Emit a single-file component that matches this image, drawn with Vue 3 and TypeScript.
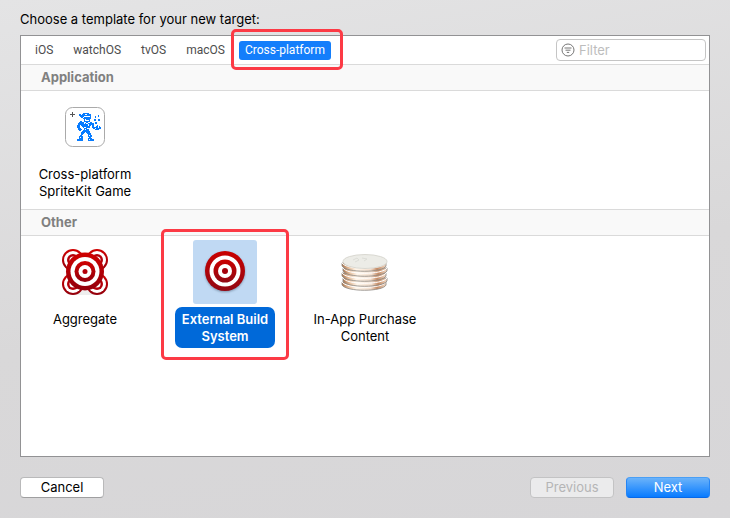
<script setup lang="ts">
import { ref } from 'vue'

const tabs = ['iOS', 'watchOS', 'tvOS', 'macOS', 'Cross-platform']
const activeTab = ref('Cross-platform')
const selected = ref('External Build System')
const filter = ref('')

const sections = [
  { title: 'Application', items: [{ name: 'Cross-platform SpriteKit Game', icon: 'sprite' }] },
  {
    title: 'Other',
    items: [
      { name: 'Aggregate', icon: 'aggregate' },
      { name: 'External Build System', icon: 'target' },
      { name: 'In-App Purchase Content', icon: 'coins' },
    ],
  },
]

// One character per pixel of the sprite.
const sprite = [
  '......######............',
  '..##.###..####..........',
  '..############.......#..',
  '...####......#....#..#..',
  '....##.#######....#.....',
  '......########..........',
  '.......#.####....##..##.',
  '.......#....#....##..##.',
  '...##..######...........',
  '..#####..##..##...##....',
  '.######.#..######.##....',
  '.##########.#####.......',
  '###.#######.##.##...#...',
  '###..########..##..##.#.',
  '###...#..####..######.##',
  '.###...###......##.#####',
  '.####..#.###......####..',
  '..##..######............',
  '.....########...........',
  '....####.####...........',
  '....###...####..........',
  '....##.....###..........',
  '...##......#.##.........',
  '..####.....####.........',
  '..#.##......##..........',
  '..####.....####.........',
  '######.....#.####.......',
  '######.....######.......',
]
const spritePath = sprite
  .map((row, y) => [...row].map((c, x) => (c === '#' ? `M${x + 16} ${y + 10}h1v1h-1z` : '')).join(''))
  .join('')

const smallTargets = [[12, 12], [36, 12], [12, 36], [36, 36]]
const coins = [37, 33, 28, 23, 18]
</script>

<template>
  <main class="dialog">
    <h1 class="prompt">Choose a template for your new target:</h1>

    <section class="panel">
      <header class="toolbar">
        <nav class="tabs">
          <button
            v-for="tab in tabs"
            :key="tab"
            type="button"
            class="tab"
            :class="{ active: tab === activeTab, marked: tab === 'Cross-platform' }"
            @click="activeTab = tab"
          >{{ tab }}</button>
        </nav>
        <label class="filter">
          <svg width="14" height="14" viewBox="0 0 14 14" fill="none" stroke="#767676" aria-hidden="true">
            <circle cx="7" cy="7" r="6" />
            <path d="M3.5 5h7M4.5 7.2h5M5.8 9.4h2.4" />
          </svg>
          <input v-model="filter" type="text" placeholder="Filter" aria-label="Filter" />
        </label>
      </header>

      <section v-for="section in sections" :key="section.title" class="group">
        <h2 class="group-title">{{ section.title }}</h2>
        <div class="items">
          <button
            v-for="item in section.items"
            :key="item.name"
            type="button"
            class="item"
            :class="{ selected: item.name === selected, marked: item.icon === 'target' }"
            @click="selected = item.name"
          >
            <span class="thumb">
              <svg v-if="item.icon === 'sprite'" width="48" height="48" viewBox="0 0 48 48" aria-hidden="true">
                <rect x="4.5" y="4.5" width="39" height="39" rx="7" fill="#fff" stroke="#aaa" />
                <path d="M9 11.5h5M11.5 9v5" stroke="#555" />
                <path :d="spritePath" fill="#087cff" shape-rendering="crispEdges" />
              </svg>

              <svg v-else-if="item.icon === 'aggregate'" width="48" height="48" viewBox="0 0 48 48" aria-hidden="true">
                <defs>
                  <linearGradient id="red-a" x1="0" y1="0" x2="0" y2="1">
                    <stop offset="0" stop-color="#d00000" />
                    <stop offset="1" stop-color="#92000c" />
                  </linearGradient>
                </defs>
                <ellipse cx="24" cy="45" rx="15" ry="2" fill="#eee" />
                <g v-for="([x, y], i) in smallTargets" :key="i">
                  <circle :cx="x" :cy="y" r="11" fill="url(#red-a)" />
                  <circle :cx="x" :cy="y" r="9" fill="#fff" />
                  <circle :cx="x" :cy="y" r="6" fill="#b4000a" />
                  <circle :cx="x" :cy="y" r="3.5" fill="#fff" />
                </g>
                <circle cx="24" cy="23.5" r="19" fill="url(#red-a)" />
                <circle cx="24" cy="23.5" r="14.5" fill="#fff" />
                <circle cx="24" cy="23.5" r="10.5" fill="url(#red-a)" />
                <circle cx="24" cy="23.5" r="6.5" fill="#fff" />
                <circle cx="24" cy="23.5" r="2.5" fill="#b4000a" />
              </svg>

              <svg v-else-if="item.icon === 'target'" width="48" height="48" viewBox="0 1 48 48" aria-hidden="true">
                <defs>
                  <linearGradient id="red-b" x1="0" y1="0" x2="0" y2="1">
                    <stop offset="0" stop-color="#ca0000" />
                    <stop offset="1" stop-color="#920813" />
                  </linearGradient>
                  <filter id="soft"><feGaussianBlur stdDeviation="1" /></filter>
                </defs>
                <circle cx="24" cy="25" r="20" fill="#53677f" opacity=".6" filter="url(#soft)" />
                <circle cx="24" cy="24" r="20" fill="url(#red-b)" />
                <circle cx="24" cy="24" r="15.5" fill="#fff" />
                <circle cx="24" cy="24" r="11.5" fill="url(#red-b)" />
                <circle cx="24" cy="24" r="7" fill="#fff" />
                <circle cx="24" cy="24" r="3" fill="#a5000c" />
              </svg>

              <svg v-else width="48" height="48" viewBox="0 0 48 48" aria-hidden="true">
                <defs>
                  <linearGradient id="edge">
                    <stop offset="0" stop-color="#a8754f" />
                    <stop offset=".15" stop-color="#e5bd9b" />
                    <stop offset=".32" stop-color="#fff5e9" />
                    <stop offset=".65" stop-color="#f3dfcf" />
                    <stop offset=".8" stop-color="#c48a64" />
                    <stop offset="1" stop-color="#f1d8c3" />
                  </linearGradient>
                </defs>
                <g v-for="(y, i) in coins" :key="y">
                  <path
                    :d="`M${1 + i % 2} ${y - 3}v3C5 ${y + 7} 42 ${y + 7} ${45 + i % 2} ${y}v-3z`"
                    fill="url(#edge)" stroke="#8a8781" stroke-width=".8"
                  />
                  <path :d="`M${1 + i % 2} ${y - 3}C5 ${y + 4} 42 ${y + 4} ${45 + i % 2} ${y - 3}`" fill="none" stroke="#fff" />
                </g>
                <ellipse cx="24" cy="13.5" rx="22" ry="7" fill="#ecece7" stroke="#d2d0c9" stroke-width=".8" />
                <path d="M12 12l4-2 2 2-4 2M21 10l5 1-3 2" fill="none" stroke="#dcddd7" />
              </svg>
            </span>
            <span class="label">{{ item.name }}</span>
          </button>
        </div>
      </section>
    </section>

    <footer class="actions">
      <button type="button" class="push">Cancel</button>
      <span class="spacer"></span>
      <button type="button" class="push" disabled>Previous</button>
      <button type="button" class="push primary">Next</button>
    </footer>
  </main>
</template>

<style>
body {
  margin: 0;
}
</style>

<style scoped>
.dialog {
  box-sizing: border-box;
  display: flex;
  flex-direction: column;
  min-height: 100vh;
  padding: 11px 20px 20px;
  background: linear-gradient(170deg, #e4e4e5 0%, #d9d8d9 55%, #d7d6d8 100%);
  font-family: Inter, "Liberation Sans", sans-serif;
  font-size: 13px;
  line-height: 17px;
  color: #000;
}

button,
input {
  font: inherit;
  color: inherit;
}

.prompt {
  margin: 0 0 7px;
  font-size: 13px;
  font-weight: 400;
}

.panel {
  flex: 1;
  border: 1px solid #929294;
  background: #fff;
}

.toolbar {
  display: flex;
  align-items: center;
  justify-content: space-between;
  height: 28px;
  padding: 0 3px 0 8px;
}

.tabs {
  display: flex;
  gap: 8px;
}

.tab {
  position: relative;
  height: 19px;
  padding: 0 6px;
  border: 0;
  border-radius: 3px;
  background: none;
  font-family: Roboto, "Liberation Sans", sans-serif;
  font-size: 12px;
  line-height: 19px;
  color: #4d4d4d;
}

.tab.active {
  background: #147efb;
  color: #fff;
}

.marked::after {
  content: "";
  position: absolute;
  border: 3px solid #fc3a45;
  border-radius: 5px;
  pointer-events: none;
}

.tab.marked::after {
  inset: -12px -12px -10px -8px;
}

.filter {
  box-sizing: border-box;
  display: flex;
  align-items: center;
  gap: 4px;
  width: 150px;
  height: 22px;
  padding: 0 4px;
  border: 1px solid #c5c5c5;
  border-radius: 4px;
}

.filter input {
  flex: 1;
  min-width: 0;
  padding: 0;
  border: 0;
  outline: 0;
  background: none;
}

.filter input::placeholder {
  color: #bdbdbd;
  opacity: 1;
}

.group-title {
  margin: 0;
  padding: 0 20px;
  border: solid #dadada;
  border-width: 1px 0;
  background: #f9f9f9;
  font-size: 13px;
  font-weight: 700;
  line-height: 25px;
  color: #808080;
}

.items {
  display: flex;
  gap: 12px;
  padding: 4px 0 6px;
}

.item {
  position: relative;
  display: flex;
  flex-direction: column;
  align-items: center;
  gap: 3px;
  width: 128px;
  padding: 0;
  border: 0;
  background: none;
}

.thumb {
  display: flex;
  align-items: center;
  justify-content: center;
  width: 64px;
  height: 64px;
  border-radius: 3px;
}

.label {
  max-width: 104px;
  padding: 4px 6px 3px;
  border-radius: 7px;
  text-align: center;
}

.item.selected .thumb {
  background: #c0d9f3;
}

.item.selected .label {
  max-width: 88px;
  background: #0069d9;
  font-weight: 600;
  color: #fff;
}

.item.marked::after {
  inset: -11px 0 -12px;
}

.actions {
  display: flex;
  gap: 12px;
  padding-top: 20px;
}

.spacer {
  flex: 1;
}

.push {
  box-sizing: border-box;
  width: 84px;
  height: 21px;
  padding: 0;
  border: 1px solid #b9b9ba;
  border-bottom-color: #9f9fa0;
  border-radius: 4px;
  background: #fff;
  line-height: 19px;
}

.push:disabled {
  border-color: #c3c3c4;
  background: #ebebec;
  color: #b5b5b6;
}

.push.primary {
  border-color: #4a9ff5 #2485f5 #0768e8;
  background: linear-gradient(#6bb3fa, #087bff);
  color: #fff;
}
</style>
